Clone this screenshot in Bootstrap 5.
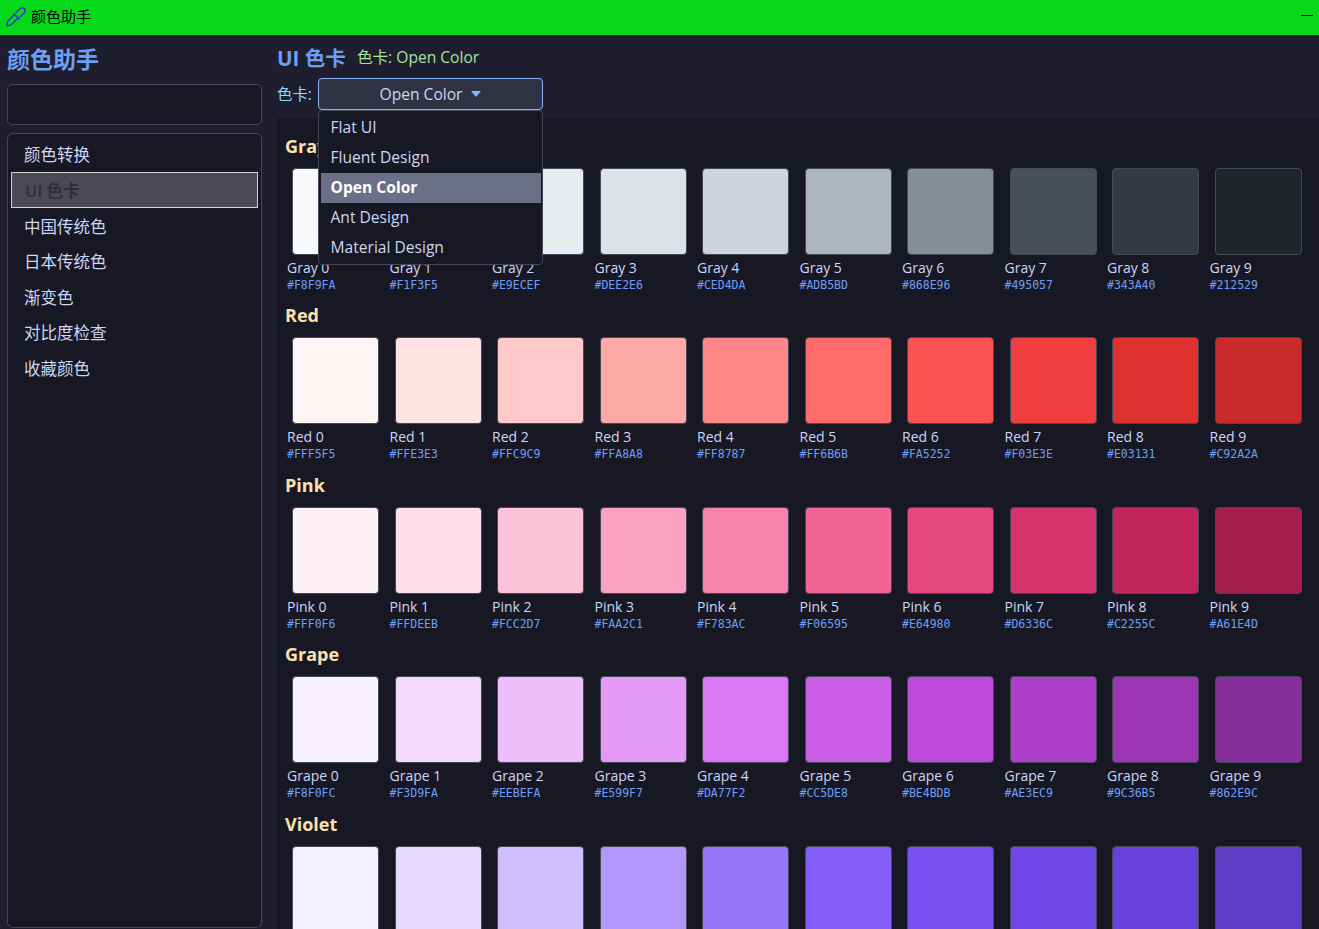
<!DOCTYPE html>
<html lang="zh-CN">
<head>
  <meta charset="UTF-8">
  <meta name="viewport" content="width=device-width, initial-scale=1.0">
  <title>颜色助手</title>
  <link href="https://cdn.jsdelivr.net/npm/bootstrap@5.3.3/dist/css/bootstrap.min.css" rel="stylesheet">
  <style>
    html, body {
      height: 100%;
      overflow: hidden;
    }
    body {
      background-color: #1e1e2e;
      color: #cdd6f4;
      font-family: "Open Sans", "Noto Sans CJK SC", sans-serif;
      font-size: 16px;
    }
    .title-strip {
      height: 35px;
      background-color: #06d91a;
      color: #000;
      font-size: 15px;
      padding: 0 6px 2px;
      gap: 5px;
    }
    .min-line {
      width: 12px;
      height: 1px;
      background-color: #000;
      margin-top: -3px;
    }
    .app-body {
      height: 894px;
    }
    .side-col {
      width: 277px;
      flex: none;
      padding: 0 15px 1px 7px;
    }
    .side-title {
      font-size: 23px;
      font-weight: 700;
      line-height: 32px;
      color: #6d9ff5;
      margin: 8px 0 9px;
    }
    .search-field {
      height: 41px;
      background-color: #181825;
      border: 1px solid #45475a;
      border-radius: 5px;
      margin-bottom: 8px;
    }
    .side-nav {
      background-color: #181825;
      border: 1px solid #45475a;
      border-radius: 6px;
      padding: 3px;
    }
    .side-item {
      height: 35.6px;
      line-height: 35px;
      padding-left: 13px;
      color: #cdd6f4;
      font-size: 16.5px;
      text-decoration: none;
      display: block;
    }
    .side-item.is-on {
      height: 36px;
      line-height: 35px;
      margin: -0.5px 0 0.5px;
      background-color: #4a4a54;
      border: 1px solid #d4d4d4;
      color: #2e2e40;
      font-size: 16.5px;
      font-weight: 600;
    }
    .main-col {
      min-width: 0;
    }
    .page-title {
      font-size: 20.6px;
      font-weight: 700;
      line-height: 28px;
      color: #6d9ff5;
      margin: 0;
    }
    .page-sub {
      color: #a6e3a1;
      font-size: 15.6px;
    }
    .head-row {
      height: 43px;
      padding-top: 2px;
      gap: 11px;
    }
    .picker-row {
      height: 40px;
      gap: 5px;
      color: #89dcfe;
    }
    .picker-label {
      margin-top: 5px;
      width: 36px;
      font-size: 15.4px;
    }
    .picker-toggle.btn {
      width: 225px;
      height: 32px;
      padding: 1px 0 0;
      background-color: #313244;
      border: 1px solid #89b4fa;
      color: #cdd6f4;
      font-size: 15.6px;
      border-radius: 4px;
    }
    .picker-toggle.dropdown-toggle::after {
      color: #89b4fa;
      margin-left: 9px;
      border-top-width: 6px;
      border-left-width: 5.5px;
      border-right-width: 5.5px;
      vertical-align: 3px;
    }
    .picker-menu.dropdown-menu {
      position: absolute;
      top: 32px;
      left: 0;
      width: 225px;
      min-width: 0;
      padding: 2px 1px 1px 2px;
      background-color: #181825;
      border: 1px solid #45475a;
      border-radius: 4px;
      font-size: 15.6px;
      z-index: 5;
    }
    .picker-menu .dropdown-item {
      height: 30px;
      line-height: 29px;
      padding: 0 10px 0 9.5px;
      color: #cdd6f4;
    }
    .picker-menu .dropdown-item.active {
      background-color: #6c7086;
      color: #fff;
      font-weight: 700;
    }
    .swatch-panel {
      background-color: #181825;
      padding: 9px 9px 0 8px;
      overflow: hidden;
      flex: 1;
    }
    .group-name {
      font-size: 18px;
      font-weight: 700;
      line-height: 30px;
      color: #f9e2af;
      margin: 4px 0 0;
    }
    .swatch-grid {
      display: grid;
      grid-template-columns: repeat(10, 1fr);
      margin-bottom: 4px;
    }
    .swatch-card {
      padding: 7px 0 0 2px;
      height: 135.4px;
    }
    .swatch-box {
      width: 87px;
      height: 87px;
      margin: 0 0 3px 5px;
      border: 1px solid #45475a;
      border-radius: 4px;
    }
    .swatch-name {
      font-size: 14px;
      line-height: 20px;
    }
    .swatch-hex {
      font-family: "DejaVu Sans Mono", "Liberation Mono", monospace;
      font-size: 11.5px;
      line-height: 14px;
      color: #6d9ff5;
    }
  </style>
</head>
<body>
  <div class="title-strip d-flex align-items-center">
    <svg width="20" height="20" viewBox="0 0 20 20" fill="none" stroke="#3a20d8" stroke-width="1.3">
      <path d="M7.5 6.5 L13.5 12.5"/>
      <path d="M9.5 6 L14.5 1.5 Q16.5 0 18.5 1.8 Q20 4 18 6 L13.5 10.5"/>
      <path d="M8.5 7.5 L1.5 14.5 L0.8 18.8 L5 18 L12 11"/>
    </svg>
    <span>颜色助手</span>
    <span class="min-line ms-auto"></span>
  </div>

  <div class="app-body d-flex">
    <div class="side-col d-flex flex-column">
      <div class="side-title">颜色助手</div>
      <div class="search-field"></div>
      <nav class="side-nav flex-grow-1">
        <a class="side-item" href="#">颜色转换</a>
        <a class="side-item is-on" href="#">UI 色卡</a>
        <a class="side-item" href="#">中国传统色</a>
        <a class="side-item" href="#">日本传统色</a>
        <a class="side-item" href="#">渐变色</a>
        <a class="side-item" href="#">对比度检查</a>
        <a class="side-item" href="#">收藏颜色</a>
      </nav>
    </div>

    <div class="main-col flex-grow-1 d-flex flex-column">
      <div class="head-row d-flex align-items-center">
        <h1 class="page-title">UI 色卡</h1>
        <span class="page-sub">色卡: Open Color</span>
      </div>
      <div class="picker-row d-flex align-items-start">
        <span class="picker-label">色卡:</span>
        <div class="dropdown">
          <button class="picker-toggle btn dropdown-toggle" type="button">Open Color</button>
          <ul class="picker-menu dropdown-menu show">
            <li><a class="dropdown-item" href="#">Flat UI</a></li>
            <li><a class="dropdown-item" href="#">Fluent Design</a></li>
            <li><a class="dropdown-item active" href="#">Open Color</a></li>
            <li><a class="dropdown-item" href="#">Ant Design</a></li>
            <li><a class="dropdown-item" href="#">Material Design</a></li>
          </ul>
        </div>
      </div>
      <div class="swatch-panel" id="swatchPanel"></div>
    </div>
  </div>

  <script src="https://cdn.jsdelivr.net/npm/bootstrap@5.3.3/dist/js/bootstrap.bundle.min.js"></script>
  <script>
    const palettes = {
      Gray: ["#F8F9FA", "#F1F3F5", "#E9ECEF", "#DEE2E6", "#CED4DA", "#ADB5BD", "#868E96", "#495057", "#343A40", "#212529"],
      Red: ["#FFF5F5", "#FFE3E3", "#FFC9C9", "#FFA8A8", "#FF8787", "#FF6B6B", "#FA5252", "#F03E3E", "#E03131", "#C92A2A"],
      Pink: ["#FFF0F6", "#FFDEEB", "#FCC2D7", "#FAA2C1", "#F783AC", "#F06595", "#E64980", "#D6336C", "#C2255C", "#A61E4D"],
      Grape: ["#F8F0FC", "#F3D9FA", "#EEBEFA", "#E599F7", "#DA77F2", "#CC5DE8", "#BE4BDB", "#AE3EC9", "#9C36B5", "#862E9C"],
      Violet: ["#F3F0FF", "#E5DBFF", "#D0BFFF", "#B197FC", "#9775FA", "#845EF7", "#7950F2", "#7048E8", "#6741D9", "#5F3DC4"]
    };

    // the last group runs off the window, its labels are below the fold
    const lastGroup = "Violet";

    document.getElementById("swatchPanel").innerHTML = Object.entries(palettes)
      .map(([name, colors]) => {
        const cards = colors
          .map((hex, i) => `
            <div class="swatch-card">
              <div class="swatch-box" style="background-color:${hex}"></div>
              ${name === lastGroup ? "" : `<div class="swatch-name">${name} ${i}</div><div class="swatch-hex">${hex}</div>`}
            </div>`)
          .join("");
        return `<div class="group-name">${name}</div><div class="swatch-grid">${cards}</div>`;
      })
      .join("");
  </script>
</body>
</html>
